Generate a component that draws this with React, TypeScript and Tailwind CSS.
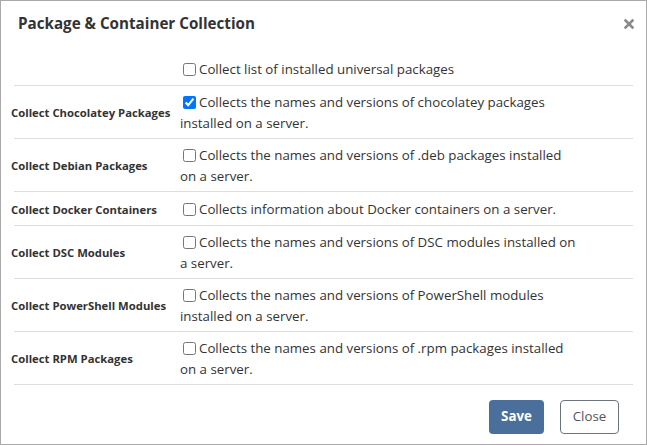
type Row = {
  label: string;
  lines: string[];
  checked?: boolean;
};

const rows: Row[] = [
  { label: "", lines: ["Collect list of installed universal packages"] },
  {
    label: "Collect Chocolatey Packages",
    lines: ["Collects the names and versions of chocolatey packages", "installed on a server."],
    checked: true,
  },
  {
    label: "Collect Debian Packages",
    lines: ["Collects the names and versions of .deb packages installed", "on a server."],
  },
  {
    label: "Collect Docker Containers",
    lines: ["Collects information about Docker containers on a server."],
  },
  {
    label: "Collect DSC Modules",
    lines: ["Collects the names and versions of DSC modules installed on", "a server."],
  },
  {
    label: "Collect PowerShell Modules",
    lines: ["Collects the names and versions of PowerShell modules", "installed on a server."],
  },
  {
    label: "Collect RPM Packages",
    lines: ["Collects the names and versions of .rpm packages installed", "on a server."],
  },
];

export default function App() {
  return (
    <div
      className="w-[647px] h-[445px] border border-[#aaa] bg-white flex flex-col text-[#333]"
      style={{ fontFamily: "'Open Sans', 'Noto Sans', sans-serif" }}
    >
      {/* Header */}
      <div className="h-[51px] flex items-start justify-between pl-[17px] pr-[12px] pt-[11px]">
        <h2 className="text-[15.2px] font-bold leading-[22px] text-[#333]">
          Package &amp; Container Collection
        </h2>
        <button className="mt-[7px] text-[#8a8a8a]" aria-label="Close">
          <svg width="10" height="10" viewBox="0 0 10 10">
            <path d="M1.5 1.5 L8.5 8.5 M8.5 1.5 L1.5 8.5" stroke="currentColor" strokeWidth="2.6" strokeLinecap="square" />
          </svg>
        </button>
      </div>

      {/* Body */}
      <div className="px-[13px]">
        {rows.map((row, i) => (
          <div
            key={i}
            className={`flex border-b border-[#dedede] ${row.lines.length > 1 ? "h-[53px]" : "h-[34px]"}`}
          >
            <div className="w-[166px] -ml-[3px] mr-[3px] pt-[3px] flex items-center text-[11.3px] font-bold">
              {row.label}
            </div>
            <div className="flex-1 flex flex-col justify-center pt-[2px] text-[13.3px] leading-[21px]">
              <div className="flex items-center whitespace-nowrap">
                <input
                  type="checkbox"
                  defaultChecked={row.checked}
                  className="w-[13px] h-[13px] ml-[3px] mr-[3px] my-0"
                />
                <span>{row.lines[0]}</span>
              </div>
              {row.lines[1] && <div className="whitespace-nowrap">{row.lines[1]}</div>}
            </div>
          </div>
        ))}
      </div>

      {/* Footer */}
      <div className="flex justify-end gap-[16px] pt-[15px] pr-[27px]">
        <button className="h-[34px] w-[55px] rounded-[4px] bg-[#4a6f9b] text-white font-bold text-[13.3px]">
          Save
        </button>
        <button className="h-[34px] w-[59px] rounded-[4px] border border-[#6c757d] bg-white text-[#555] text-[13.3px]">
          Close
        </button>
      </div>
    </div>
  );
}
